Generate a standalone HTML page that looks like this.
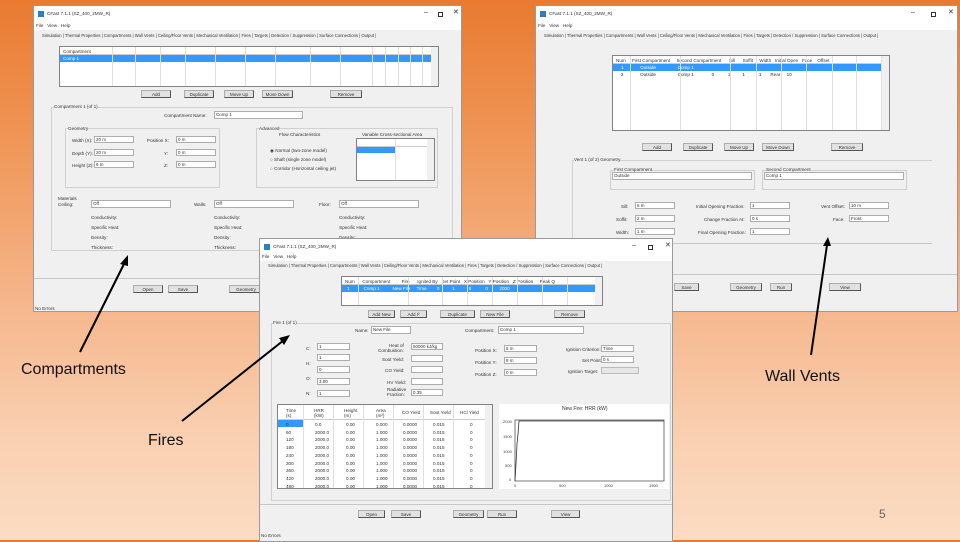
<!DOCTYPE html>
<html><head><meta charset="utf-8">
<style>
*{margin:0;padding:0;box-sizing:border-box}
body{width:960px;height:540px;overflow:hidden;position:relative;font-family:"Liberation Sans",sans-serif;background:linear-gradient(180deg,#e97a30 0%,#f09a5e 30%,#f5b58a 55%,#f9cfb0 80%,#fbdcc3 100%)}
.a{position:absolute}
.w{position:absolute;background:#f0f0f0;border:1px solid #9a9a9a;overflow:hidden}
.tb{position:absolute;left:0;top:0;right:0;height:15px;background:#fff}
.mn{position:absolute;left:0;right:0;height:9px;background:#fff}
.s{position:absolute;font-size:4.6px;color:#333;white-space:nowrap;line-height:5px}
.i{position:absolute;background:#fff;border:1px solid #adadad;font-size:4.5px;color:#333;padding-left:1px;line-height:6px;overflow:hidden;white-space:nowrap}
.b{position:absolute;background:#e1e1e1;border:1px solid #adadad;border-right-color:#555;border-bottom-color:#555;font-size:4.5px;color:#333;text-align:center;line-height:7px}
.g{position:absolute;border:1px solid #d0d0d0}
.t{position:absolute;background:#fff;border:1px solid #828282;overflow:hidden}
.hd{position:absolute;left:0;right:0;top:0;height:8px;background:#fff;border-bottom:1px solid #ccc}
.sel{position:absolute;background:#3399ff}
.vl{position:absolute;top:0;bottom:0;width:1px;background:#e0e0e0}
.sb{position:absolute;top:0;bottom:0;right:0;width:7px;background:#f0f0f0}
.tabs{position:absolute;height:9px;border-bottom:1px solid #d9d9d9}
.lbl{position:absolute;font-family:"Liberation Sans Narrow","Liberation Sans",sans-serif;font-size:16px;color:#111}
</style></head><body>

<!-- Window 1 -->
<div class="w" style="left:33px;top:5px;width:429px;height:307px">
 <div class="tb"></div>
 <div class="a" style="left:4px;top:5px;width:6px;height:6px;background:#2f7fc0"></div>
 <div class="s" style="left:13px;top:5px">CFast 7.1.1 (SZ_400_2MW_R)</div>
 <div class="s" style="left:390px;top:4px;font-size:7px">–</div>
 <div class="a" style="left:404px;top:6px;width:5px;height:5px;border:1px solid #333"></div>
 <div class="s" style="left:419px;top:4px;font-size:7px">✕</div>
 <div class="mn" style="top:15px"></div>
 <div class="s" style="left:2px;top:17px">File &nbsp; View &nbsp; Help</div>
 <div class="s" style="left:8px;top:27px;font-size:4.2px">Simulation | Thermal Properties | Compartments | Wall Vents | Ceiling/Floor Vents | Mechanical Ventilation | Fires | Targets | Detection / Suppression | Surface Connections | Output |</div>
 <div class="t" style="left:25px;top:40px;width:380px;height:41px">
  <div class="hd"></div>
  <div class="sel" style="left:0;top:8px;right:7px;height:7px"></div>
  <div class="s" style="left:3px;top:2px">Compartment</div><div class="s" style="left:3px;top:9px;color:#fff">Comp 1</div>
  <div class="vl" style="left:52px"></div><div class="vl" style="left:75px"></div><div class="vl" style="left:100px"></div><div class="vl" style="left:125px"></div><div class="vl" style="left:155px"></div><div class="vl" style="left:185px"></div><div class="vl" style="left:215px"></div><div class="vl" style="left:250px"></div><div class="vl" style="left:280px"></div><div class="vl" style="left:312px"></div><div class="vl" style="left:325px"></div><div class="vl" style="left:338px"></div><div class="vl" style="left:350px"></div><div class="vl" style="left:362px"></div>
  <div class="sb"></div>
 </div>
 <div class="b" style="left:107px;top:84px;width:30px;height:8px">Add</div>
 <div class="b" style="left:150px;top:84px;width:30px;height:8px">Duplicate</div>
 <div class="b" style="left:190px;top:84px;width:30px;height:8px">Move Up</div>
 <div class="b" style="left:228px;top:84px;width:31px;height:8px">Move Down</div>
 <div class="b" style="left:296px;top:84px;width:32px;height:8px">Remove</div>
 <div class="g" style="left:17px;top:101px;width:402px;height:144px"></div>
 <div class="s" style="left:20px;top:98px;background:#f0f0f0">Compartment 1 (of 1)</div>
 <div class="s" style="left:130px;top:107px">Compartment Name:</div>
 <div class="i" style="left:180px;top:105px;width:89px;height:8px">Comp 1</div>
 <div class="g" style="left:31px;top:122px;width:155px;height:60px"></div>
 <div class="s" style="left:34px;top:120px;background:#f0f0f0">Geometry</div>
 <div class="s" style="left:38px;top:132px">Width (X):</div><div class="i" style="left:60px;top:130px;width:40px;height:7px">20 m</div>
 <div class="s" style="left:38px;top:145px">Depth (Y):</div><div class="i" style="left:60px;top:143px;width:40px;height:7px">20 m</div>
 <div class="s" style="left:38px;top:157px">Height (Z):</div><div class="i" style="left:60px;top:155px;width:40px;height:7px">6 m</div>
 <div class="s" style="left:113px;top:132px">Position X:</div><div class="i" style="left:142px;top:130px;width:40px;height:7px">0 m</div>
 <div class="s" style="left:130px;top:145px">Y:</div><div class="i" style="left:142px;top:143px;width:40px;height:7px">0 m</div>
 <div class="s" style="left:130px;top:157px">Z:</div><div class="i" style="left:142px;top:155px;width:40px;height:7px">0 m</div>
 <div class="g" style="left:222px;top:122px;width:182px;height:60px"></div>
 <div class="s" style="left:225px;top:120px;background:#f0f0f0">Advanced</div>
 <div class="s" style="left:245px;top:126px">Flow Characteristics</div>
 <div class="s" style="left:328px;top:126px">Variable Cross-sectional Area</div>
 <div class="s" style="left:236px;top:142px">◉ Normal (two-zone model)</div>
 <div class="s" style="left:236px;top:151px">○ Shaft (single zone model)</div>
 <div class="s" style="left:236px;top:160px">○ Corridor (Horizontal ceiling jet)</div>
 <div class="t" style="left:322px;top:132px;width:79px;height:43px"><div class="hd"></div><div class="sel" style="left:0;top:8px;width:38px;height:6px"></div><div class="vl" style="left:38px"></div><div class="sb"></div></div>
 <div class="s" style="left:24px;top:190px">Materials</div>
 <div class="s" style="left:24px;top:196px">Ceiling:</div><div class="i" style="left:57px;top:194px;width:80px;height:8px">Off</div>
 <div class="s" style="left:160px;top:196px">Walls:</div><div class="i" style="left:180px;top:194px;width:80px;height:8px">Off</div>
 <div class="s" style="left:285px;top:196px">Floor:</div><div class="i" style="left:305px;top:194px;width:80px;height:8px">Off</div>
 <div class="s" style="left:57px;top:209px">Conductivity:<br><br>Specific Heat:<br><br>Density:<br><br>Thickness:</div>
 <div class="s" style="left:180px;top:209px">Conductivity:<br><br>Specific Heat:<br><br>Density:<br><br>Thickness:</div>
 <div class="s" style="left:305px;top:209px">Conductivity:<br><br>Specific Heat:<br><br>Density:<br><br>Thickness:</div>
 <div class="a" style="left:0;top:272px;width:429px;height:1px;background:#c8c8c8"></div>
 <div class="b" style="left:99px;top:279px;width:30px;height:8px">Open</div>
 <div class="b" style="left:134px;top:279px;width:30px;height:8px">Save</div>
 <div class="b" style="left:195px;top:279px;width:34px;height:8px">Geometry</div>
 <div class="s" style="left:1px;top:300px">No Errors</div>
</div>

<!-- Window 2 -->
<div class="w" style="left:535px;top:5px;width:423px;height:307px">
 <div class="tb"></div>
 <div class="a" style="left:4px;top:5px;width:6px;height:6px;background:#2f7fc0"></div>
 <div class="s" style="left:13px;top:5px">CFast 7.1.1 (SZ_400_2MW_R)</div>
 <div class="s" style="left:375px;top:4px;font-size:7px">–</div>
 <div class="a" style="left:395px;top:6px;width:5px;height:5px;border:1px solid #333"></div>
 <div class="s" style="left:412px;top:4px;font-size:7px">✕</div>
 <div class="mn" style="top:15px"></div>
 <div class="s" style="left:2px;top:17px">File &nbsp; View &nbsp; Help</div>
 <div class="s" style="left:8px;top:27px;font-size:4.2px">Simulation | Thermal Properties | Compartments | Wall Vents | Ceiling/Floor Vents | Mechanical Ventilation | Fires | Targets | Detection / Suppression | Surface Connections | Output |</div>
 <div class="t" style="left:76px;top:49px;width:278px;height:76px">
  <div class="hd"></div>
  <div class="sel" style="left:0;top:8px;right:7px;height:7px"></div>
  <div class="s" style="left:3px;top:2px">Num &nbsp;&nbsp;&nbsp; First Compartment &nbsp;&nbsp;&nbsp; Second Compartment &nbsp;&nbsp;&nbsp;&nbsp; Sill &nbsp;&nbsp;&nbsp;&nbsp; Soffit &nbsp;&nbsp;&nbsp; Width &nbsp; Initial Open &nbsp; Face &nbsp;&nbsp; Offset</div>
  <div class="s" style="left:8px;top:9px;color:#fff">1 &nbsp;&nbsp;&nbsp;&nbsp;&nbsp;&nbsp;&nbsp;&nbsp;&nbsp;&nbsp;&nbsp; Outside &nbsp;&nbsp;&nbsp;&nbsp;&nbsp;&nbsp;&nbsp;&nbsp;&nbsp;&nbsp;&nbsp;&nbsp;&nbsp;&nbsp;&nbsp; Comp 1</div>
  <div class="s" style="left:8px;top:16px">2 &nbsp;&nbsp;&nbsp;&nbsp;&nbsp;&nbsp;&nbsp;&nbsp;&nbsp;&nbsp;&nbsp; Outside &nbsp;&nbsp;&nbsp;&nbsp;&nbsp;&nbsp;&nbsp;&nbsp;&nbsp;&nbsp;&nbsp;&nbsp;&nbsp;&nbsp;&nbsp; Comp 1 &nbsp;&nbsp;&nbsp;&nbsp;&nbsp;&nbsp;&nbsp;&nbsp;&nbsp;&nbsp;&nbsp;&nbsp; 0 &nbsp;&nbsp;&nbsp;&nbsp;&nbsp;&nbsp;&nbsp;&nbsp;&nbsp; 2 &nbsp;&nbsp;&nbsp;&nbsp;&nbsp;&nbsp;&nbsp; 1 &nbsp;&nbsp;&nbsp;&nbsp;&nbsp;&nbsp;&nbsp;&nbsp;&nbsp; 1 &nbsp;&nbsp;&nbsp;&nbsp;&nbsp; Rear &nbsp;&nbsp;&nbsp; 10</div>
  <div class="vl" style="left:17px"></div><div class="vl" style="left:67px"></div><div class="vl" style="left:117px"></div><div class="vl" style="left:143px"></div><div class="vl" style="left:168px"></div><div class="vl" style="left:193px"></div><div class="vl" style="left:219px"></div><div class="vl" style="left:243px"></div><div class="vl" style="left:268px"></div>
  <div class="sb"></div>
 </div>
 <div class="b" style="left:106px;top:137px;width:30px;height:8px">Add</div>
 <div class="b" style="left:147px;top:137px;width:30px;height:8px">Duplicate</div>
 <div class="b" style="left:188px;top:137px;width:30px;height:8px">Move Up</div>
 <div class="b" style="left:226px;top:137px;width:32px;height:8px">Move Down</div>
 <div class="b" style="left:295px;top:137px;width:32px;height:8px">Remove</div>
 <div class="g" style="left:36px;top:154px;width:360px;height:84px;border-right:none;border-bottom:none"></div>
 <div class="a" style="left:36px;top:237px;width:360px;height:1px;background:#c8c8c8"></div>
 <div class="s" style="left:38px;top:151px;background:#f0f0f0">Vent 1 (of 2) Geometry</div>
 <div class="g" style="left:74px;top:164px;width:145px;height:20px"></div>
 <div class="s" style="left:78px;top:161px;background:#f0f0f0">First Compartment</div>
 <div class="i" style="left:76px;top:166px;width:140px;height:8px">Outside</div>
 <div class="g" style="left:226px;top:164px;width:145px;height:20px"></div>
 <div class="s" style="left:230px;top:161px;background:#f0f0f0">Second Compartment</div>
 <div class="i" style="left:228px;top:166px;width:140px;height:8px">Comp 1</div>
 <div class="s" style="left:85px;top:198px">Sill:</div><div class="i" style="left:99px;top:196px;width:40px;height:7px">6 m</div>
 <div class="s" style="left:80px;top:211px">Soffit:</div><div class="i" style="left:99px;top:209px;width:40px;height:7px">2 m</div>
 <div class="s" style="left:80px;top:224px">Width:</div><div class="i" style="left:99px;top:222px;width:40px;height:7px">1 m</div>
 <div class="s" style="left:160px;top:198px">Initial Opening Fraction:</div><div class="i" style="left:214px;top:196px;width:40px;height:7px">1</div>
 <div class="s" style="left:168px;top:211px">Change Fraction At:</div><div class="i" style="left:214px;top:209px;width:40px;height:7px">0 s</div>
 <div class="s" style="left:162px;top:224px">Final Opening Fraction:</div><div class="i" style="left:214px;top:222px;width:40px;height:7px">1</div>
 <div class="s" style="left:285px;top:198px">Vent Offset:</div><div class="i" style="left:313px;top:196px;width:40px;height:7px">10 m</div>
 <div class="s" style="left:297px;top:211px">Face:</div><div class="i" style="left:313px;top:209px;width:40px;height:7px">Front</div>
 <div class="a" style="left:0;top:268px;width:423px;height:1px;background:#c8c8c8"></div>
 <div class="b" style="left:138px;top:277px;width:25px;height:8px">Save</div>
 <div class="b" style="left:194px;top:277px;width:32px;height:8px">Geometry</div>
 <div class="b" style="left:234px;top:277px;width:22px;height:8px">Run</div>
 <div class="b" style="left:293px;top:277px;width:32px;height:8px">View</div>
</div>

<!-- Window 3 -->
<div class="w" style="left:259px;top:238px;width:414px;height:304px">
 <div class="tb"></div>
 <div class="a" style="left:4px;top:5px;width:6px;height:6px;background:#2f7fc0"></div>
 <div class="s" style="left:13px;top:5px">CFast 7.1.1 (SZ_400_2MW_R)</div>
 <div class="s" style="left:372px;top:4px;font-size:7px">–</div>
 <div class="a" style="left:388px;top:6px;width:5px;height:5px;border:1px solid #333"></div>
 <div class="s" style="left:405px;top:4px;font-size:7px">✕</div>
 <div class="mn" style="top:13px"></div>
 <div class="s" style="left:2px;top:15px">File &nbsp; View &nbsp; Help</div>
 <div class="s" style="left:8px;top:24px;font-size:4.2px">Simulation | Thermal Properties | Compartments | Wall Vents | Ceiling/Floor Vents | Mechanical Ventilation | Fires | Targets | Detection / Suppression | Surface Connections | Output |</div>
 <div class="t" style="left:81px;top:37px;width:262px;height:30px">
  <div class="hd"></div>
  <div class="sel" style="left:0;top:8px;right:7px;height:7px"></div>
  <div class="s" style="left:3px;top:2px">Num &nbsp;&nbsp;&nbsp;&nbsp; Compartment &nbsp;&nbsp;&nbsp;&nbsp;&nbsp;&nbsp;&nbsp; Fire &nbsp;&nbsp;&nbsp;&nbsp; Ignited By &nbsp; Set Point &nbsp; X Position &nbsp; Y Position &nbsp; Z Position &nbsp;&nbsp;&nbsp; Peak Q</div>
  <div class="s" style="left:5px;top:9px;color:#fff">1 &nbsp;&nbsp;&nbsp;&nbsp;&nbsp;&nbsp;&nbsp;&nbsp;&nbsp; Comp 1 &nbsp;&nbsp;&nbsp;&nbsp;&nbsp;&nbsp;&nbsp;&nbsp; New File &nbsp;&nbsp;&nbsp; Time &nbsp;&nbsp;&nbsp;&nbsp;&nbsp;&nbsp; 0 &nbsp;&nbsp;&nbsp;&nbsp;&nbsp;&nbsp;&nbsp;&nbsp; 1 &nbsp;&nbsp;&nbsp;&nbsp;&nbsp;&nbsp;&nbsp;&nbsp;&nbsp; 8 &nbsp;&nbsp;&nbsp;&nbsp;&nbsp;&nbsp;&nbsp;&nbsp;&nbsp; 0 &nbsp;&nbsp;&nbsp;&nbsp;&nbsp;&nbsp;&nbsp; 2000</div>
  <div class="vl" style="left:16px"></div><div class="vl" style="left:66px"></div><div class="vl" style="left:100px"></div><div class="vl" style="left:125px"></div><div class="vl" style="left:150px"></div><div class="vl" style="left:175px"></div><div class="vl" style="left:200px"></div><div class="vl" style="left:225px"></div>
  <div class="sb"></div>
 </div>
 <div class="b" style="left:108px;top:71px;width:27px;height:8px">Add New</div>
 <div class="b" style="left:140px;top:71px;width:27px;height:8px">Add t²</div>
 <div class="b" style="left:180px;top:71px;width:35px;height:8px">Duplicate</div>
 <div class="b" style="left:220px;top:71px;width:30px;height:8px">New File</div>
 <div class="b" style="left:294px;top:71px;width:31px;height:8px">Remove</div>
 <div class="g" style="left:11px;top:84px;width:400px;height:178px"></div>
 <div class="s" style="left:13px;top:81px;background:#f0f0f0">Fire 1 (of 1)</div>
 <div class="s" style="left:95px;top:89px">Name:</div><div class="i" style="left:111px;top:87px;width:40px;height:8px">New File</div>
 <div class="s" style="left:205px;top:89px">Compartment:</div><div class="i" style="left:238px;top:87px;width:86px;height:8px">Comp 1</div>
 <div class="s" style="left:46px;top:107px">C:<br><br><br>H:<br><br><br>O:<br><br><br>N:<br><br><br>Cl:</div>
 <div class="i" style="left:57px;top:104px;width:33px;height:7px">1</div>
 <div class="i" style="left:57px;top:115px;width:33px;height:7px">1</div>
 <div class="i" style="left:57px;top:127px;width:33px;height:7px">0</div>
 <div class="i" style="left:57px;top:139px;width:33px;height:7px">3.00</div>
 <div class="i" style="left:57px;top:151px;width:33px;height:7px">1</div>
 <div class="s" style="left:118px;top:104px;text-align:right">Heat of<br>Combustion:</div><div class="i" style="left:151px;top:104px;width:32px;height:7px">50000 kJ/kg</div>
 <div class="s" style="left:122px;top:118px">Soot Yield:</div><div class="i" style="left:151px;top:116px;width:32px;height:7px"></div>
 <div class="s" style="left:125px;top:129px">CO Yield:</div><div class="i" style="left:151px;top:127px;width:32px;height:7px"></div>
 <div class="s" style="left:127px;top:141px">HV Yield:</div><div class="i" style="left:151px;top:139px;width:32px;height:7px"></div>
 <div class="s" style="left:127px;top:148px">Radiative<br>Fraction:</div><div class="i" style="left:151px;top:150px;width:32px;height:7px">0.35</div>
 <div class="s" style="left:215px;top:109px">Position X:</div><div class="i" style="left:244px;top:106px;width:33px;height:7px">5 m</div>
 <div class="s" style="left:215px;top:121px">Position Y:</div><div class="i" style="left:244px;top:118px;width:33px;height:7px">8 m</div>
 <div class="s" style="left:215px;top:133px">Position Z:</div><div class="i" style="left:244px;top:130px;width:33px;height:7px">0 m</div>
 <div class="s" style="left:306px;top:108px">Ignition Criterion:</div><div class="i" style="left:341px;top:106px;width:33px;height:7px">Time</div>
 <div class="s" style="left:322px;top:119px">Set Point:</div><div class="i" style="left:341px;top:117px;width:33px;height:7px">0 s</div>
 <div class="s" style="left:308px;top:130px">Ignition Target:</div><div class="a" style="left:341px;top:128px;width:38px;height:7px;background:#e6e6e6;border:1px solid #bbb"></div>
 <div class="t" style="left:17px;top:165px;width:216px;height:85px">
  <div class="a" style="left:0;top:0;right:0;height:15px;background:#fff;border-bottom:1px solid #ccc"></div>
  <div class="sel" style="left:0;top:15px;width:25px;height:7px"></div>
  <div class="s" style="left:8px;top:3px">Time<br>(s)</div><div class="s" style="left:36px;top:3px">HRR<br>(kW)</div><div class="s" style="left:66px;top:3px">Height<br>(m)</div><div class="s" style="left:98px;top:3px">Area<br>(m²)</div><div class="s" style="left:124px;top:5px">CO Yield</div><div class="s" style="left:152px;top:5px">Soot Yield</div><div class="s" style="left:182px;top:5px">HCl Yield</div>
  <div class="s" style="left:8px;top:16px;line-height:7.7px">0<br>60<br>120<br>180<br>240<br>300<br>360<br>420<br>480<br>540</div>
  <div class="s" style="left:37px;top:16px;line-height:7.7px">0.0<br>2000.0<br>2000.0<br>2000.0<br>2000.0<br>2000.0<br>2000.0<br>2000.0<br>2000.0<br>2000.0</div>
  <div class="s" style="left:68px;top:16px;line-height:7.7px">0.00<br>0.00<br>0.00<br>0.00<br>0.00<br>0.00<br>0.00<br>0.00<br>0.00<br>0.00</div>
  <div class="s" style="left:98px;top:16px;line-height:7.7px">0.000<br>1.000<br>1.000<br>1.000<br>1.000<br>1.000<br>1.000<br>1.000<br>1.000<br>1.000</div>
  <div class="s" style="left:125px;top:16px;line-height:7.7px">0.0000<br>0.0000<br>0.0000<br>0.0000<br>0.0000<br>0.0000<br>0.0000<br>0.0000<br>0.0000<br>0.0000</div>
  <div class="s" style="left:155px;top:16px;line-height:7.7px">0.015<br>0.015<br>0.015<br>0.015<br>0.015<br>0.015<br>0.015<br>0.015<br>0.015<br>0.015</div>
  <div class="s" style="left:192px;top:16px;line-height:7.7px">0<br>0<br>0<br>0<br>0<br>0<br>0<br>0<br>0<br>0</div>
  <div class="vl" style="left:25px"></div><div class="vl" style="left:55px"></div><div class="vl" style="left:85px"></div><div class="vl" style="left:115px"></div><div class="vl" style="left:145px"></div><div class="vl" style="left:175px"></div>
  <div class="sb"></div>
 </div>
 <div class="a" style="left:239px;top:165px;width:170px;height:85px;background:#fff"></div>
 <div class="s" style="left:302px;top:168px;font-size:5px">New Fire: HRR (kW)</div>
 <svg class="a" style="left:239px;top:165px" width="170" height="85">
  <rect x="16" y="16" width="149" height="61" fill="none" stroke="#555" stroke-width="0.8"/>
  <polyline points="16,77 17,60 18,40 19,30 20,17 21,17 165,17" fill="none" stroke="#333" stroke-width="0.8"/>
  <g font-size="4" fill="#444" font-family="Liberation Sans"><text x="4" y="19">2000</text><text x="4" y="34">1500</text><text x="4" y="49">1000</text><text x="6" y="63">500</text><text x="10" y="77">0</text><text x="15" y="83">0</text><text x="60" y="83">500</text><text x="105" y="83">1000</text><text x="150" y="83">1500</text></g>
 </svg>
 <div class="a" style="left:0;top:265px;width:414px;height:1px;background:#c8c8c8"></div>
 <div class="b" style="left:98px;top:271px;width:27px;height:8px">Open</div>
 <div class="b" style="left:131px;top:271px;width:30px;height:8px">Save</div>
 <div class="b" style="left:193px;top:271px;width:31px;height:8px">Geometry</div>
 <div class="b" style="left:227px;top:271px;width:30px;height:8px">Run</div>
 <div class="b" style="left:291px;top:271px;width:29px;height:8px">View</div>
 <div class="s" style="left:1px;top:294px">No Errors</div>
</div>

<!-- arrows -->
<svg class="a" style="left:0;top:0" width="960" height="540">
 <g stroke="#000" stroke-width="2" fill="#000">
  <line x1="80" y1="352" x2="125" y2="262"/><polygon points="128,255 120,264 128,266" stroke="none"/>
  <line x1="182" y1="421" x2="284" y2="340"/><polygon points="290,335 279,338 284,345" stroke="none"/>
  <line x1="811" y1="355" x2="827" y2="245"/><polygon points="828,237 823,246 831,246" stroke="none"/>
 </g>
</svg>
<div class="lbl" style="left:21px;top:361px">Compartments</div>
<div class="lbl" style="left:765px;top:368px">Wall Vents</div>
<div class="lbl" style="left:148px;top:432px">Fires</div>
<div class="a" style="left:879px;top:507px;font-size:12px;color:#666;font-family:'Liberation Sans',sans-serif">5</div>
</body></html>
